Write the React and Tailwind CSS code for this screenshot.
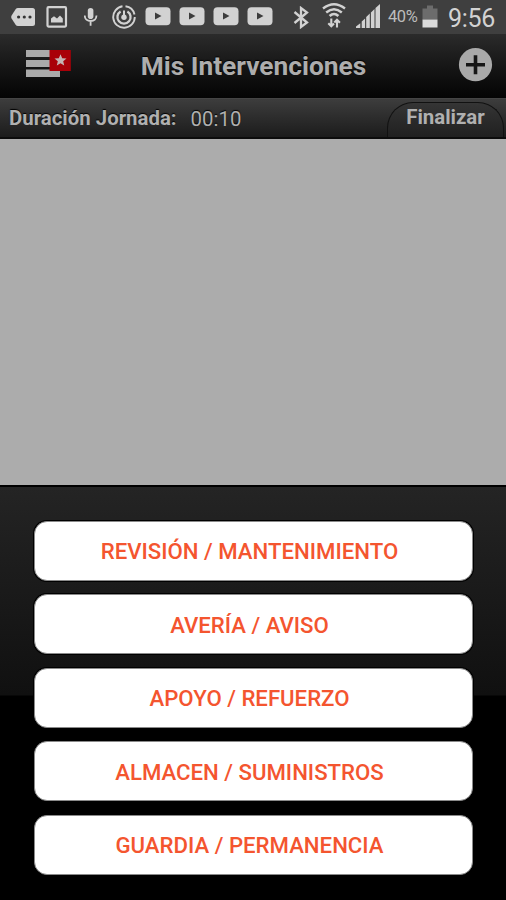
import { useState } from 'react';

const OPTIONS = [
    'REVISIÓN / MANTENIMIENTO',
    'AVERÍA / AVISO',
    'APOYO / REFUERZO',
    'ALMACEN / SUMINISTROS',
    'GUARDIA / PERMANENCIA',
];

const VideoIcon = () => (
    <svg className="w-[26px] h-[19px]" viewBox="0 0 26 19">
        <rect x="0.5" y="0.2" width="25" height="18" rx="4" fill="#d2d2d2" />
        <path d="M10 5.5 L16.5 9 L10 12.5 Z" fill="#3c3c3c" />
    </svg>
);

const StatusBar = () => (
    <div className="h-[34px] bg-[#3f3f3f] flex items-center text-[#d2d2d2]">
        {/* Notifications */}
        <svg className="ml-[11px] -mt-px w-6 h-[18px] shrink-0" viewBox="0 0 24 18">
            <path d="M7 0 H21.5 Q24 0 24 2.5 V15.5 Q24 18 21.5 18 H7 Q5.5 18 4.6 16.7 L0.6 10.5 Q-0.2 9 0.6 7.5 L4.6 1.3 Q5.5 0 7 0 Z" fill="currentColor" />
            <circle cx="7.6" cy="9" r="1.6" fill="#333" />
            <circle cx="13.3" cy="9" r="1.6" fill="#333" />
            <circle cx="19" cy="9" r="1.6" fill="#333" />
        </svg>
        <svg className="ml-[11px] -mt-px w-[22px] h-[22px] shrink-0" viewBox="0 0 22 22">
            <rect x="1.5" y="1.2" width="18.5" height="19.4" rx="1" fill="none" stroke="currentColor" strokeWidth="2.2" />
            <path d="M5 16.5 V12.5 L8 10.3 L11 12.5 L14 9.5 L16.8 12.5 V16.5 Z" fill="currentColor" />
        </svg>
        <svg className="ml-4 -mt-px w-[14px] h-[18px] shrink-0" viewBox="0 0 14 18">
            <rect x="3.8" y="0" width="5.6" height="11" rx="2.8" fill="currentColor" />
            <path d="M0.7 7.5 Q1 13 6.6 13 Q12.2 13 12.5 7.5 M6.6 13 V17.8" fill="none" stroke="currentColor" strokeWidth="1.8" />
        </svg>
        <svg className="ml-[14px] -mt-px w-6 h-6 shrink-0" viewBox="0 0 24 24" fill="none" stroke="currentColor">
            <path d="M10.5 1.3 A10.8 10.8 0 1 0 22.8 12" strokeWidth="1.9" />
            <path d="M13.5 1.3 A10.8 10.8 0 0 1 22.5 9.5" strokeWidth="1.9" />
            <path d="M8.6 6.4 A6.6 6.6 0 1 0 15.4 6.4" strokeWidth="2.3" />
            <path d="M12 5.5 V12" strokeWidth="2" />
            <circle cx="12" cy="12.3" r="2.7" fill="currentColor" stroke="none" />
        </svg>
        <div className="ml-[9px] -mt-px flex gap-[8px] shrink-0">
            <VideoIcon />
            <VideoIcon />
            <VideoIcon />
            <VideoIcon />
        </div>
        {/* Connectivity */}
        <svg className="ml-5 w-4 h-[23px] shrink-0" viewBox="0 0 16 23" fill="none" stroke="currentColor" strokeWidth="2.3">
            <path d="M1.5 6 L14 16.5 L8 21 V2 L14 6.5 L1.5 17" />
        </svg>
        <svg className="ml-[13px] -mt-[3px] w-6 h-[25px] shrink-0" viewBox="0 0 24 25" fill="none" stroke="currentColor">
            <path d="M1 5.5 Q12 -3 23 5.5" strokeWidth="2.4" />
            <path d="M4.2 9.5 Q12 2.8 19.8 9.5" strokeWidth="2.4" />
            <path d="M7.6 13 Q12 9 16.4 13" strokeWidth="2.6" />
            <path d="M9.3 15.5 V23 M6.3 20.2 L9.3 23.3 L12 20.5" strokeWidth="2.1" />
            <path d="M15 24.5 V17.5 M12.3 19.5 L15 16.7 L17.9 19.7" strokeWidth="2.1" />
        </svg>
        <svg className="ml-[10px] -mt-[2px] w-6 h-[24px] shrink-0" viewBox="0 0 24 24" fill="currentColor">
            <path d="M0 24 V22.5 L4.3 19.2 V24 Z M5.7 24 V17.5 L9.1 14.6 V24 Z M10.2 24 V13 L13.8 9.6 V24 Z M14.9 24 V8.5 L18.5 5 V24 Z M19.5 24 V4 L24 0 V24 Z" />
        </svg>
        <span className="ml-[8px] mt-px w-[31px] shrink-0 text-[16.5px] tracking-[-0.4px] whitespace-nowrap text-[#bcbcbc]">40%</span>
        <svg className="ml-[3px] -mt-[2px] w-4 h-[23px] shrink-0" viewBox="0 0 16 23">
            <path d="M0.5 3.5 H5 V0.5 H11 V3.5 H15.5 V14.5 H0.5 Z" fill="#6c6c6c" />
            <rect x="0.5" y="14.5" width="15" height="8" fill="#dadada" />
        </svg>
        <span className="ml-[10px] text-[25px] leading-none tracking-[-0.3px] whitespace-nowrap mt-[2px]">9:56</span>
    </div>
);

const Header = () => (
    <header className="h-16 bg-linear-to-b from-[#2b2b2b] to-[#050505] flex items-center pl-[26px] pr-[13px]">
        <button className="w-[46px] h-7 -mt-1 shrink-0">
            <svg className="w-[46px] h-7" viewBox="0 0 46 28">
                <path d="M0 0 H34 V7 H0 Z M0 10 H34 V17 H0 Z M0 19.5 H34 V27 H0 Z" fill="#aaa" />
                <rect x="23.5" y="-1" width="21.3" height="22" fill="#a90008" />
                <path d="M34.5 4.2 L36.2 8.2 L40.5 8.5 L37.2 11.3 L38.2 15.5 L34.5 13.2 L30.8 15.5 L31.8 11.3 L28.5 8.5 L32.8 8.2 Z" fill="#c4b4b4" />
            </svg>
        </button>
        <h1 className="flex-1 text-center pr-[23px] pt-[2px] text-[26.3px] font-bold text-[#adadad] whitespace-nowrap [text-shadow:0_-1px_1px_#000]">Mis Intervenciones</h1>
        <button className="w-[35px] h-[35px] -mt-1 shrink-0">
            <svg className="w-[35px] h-[35px]" viewBox="0 0 35 35">
                <circle cx="17.5" cy="17.7" r="16.6" fill="#a9a9a9" />
                <path d="M17.5 8.2 V27.2 M8 17.7 H27" stroke="#161616" strokeWidth="3.6" />
            </svg>
        </button>
    </header>
);

const App = () => {
    const [selected, setSelected] = useState(null);

    return (
        <div className="w-full h-[900px] flex flex-col overflow-hidden bg-black font-['Roboto',sans-serif]">
            <StatusBar />
            <Header />

            {/* Working day bar */}
            <div className="h-[41px] bg-linear-to-b from-[#3d3d3d] to-[#1c1c1c] border-b-2 border-[#0c0c0c] border-t border-t-[#454545] flex items-stretch text-[20.4px] text-[#b0b0b0] [text-shadow:0_-1px_1px_#000]">
                <span className="pl-[9px] leading-[39px] font-bold whitespace-nowrap">Duración Jornada:</span>
                <span className="ml-[14px] leading-[40px] whitespace-nowrap">00:10</span>
                <button className="ml-auto mr-[2px] mt-[3px] w-[117px] rounded-t-[26px] border border-b-0 border-[#111] bg-linear-to-b from-[#353535] to-[#202020] font-bold leading-[27px] pb-[6px]">
                    Finalizar
                </button>
            </div>

            <main className="h-[346px] bg-[#acacac]"></main>

            {/* Intervention type sheet */}
            <div className="flex-1 border-t-2 border-black bg-[linear-gradient(to_bottom,#242424_0px,#101010_208px,#000_209px)] pt-[34px] pl-[34px] pr-[33px] flex flex-col gap-[13.4px]">
                {OPTIONS.map((option) => (
                    <button
                        key={option}
                        onClick={() => setSelected(option)}
                        aria-pressed={selected === option}
                        className="h-[60px] shrink-0 rounded-[13px] bg-white border border-[#8a8a8a] shadow-[0_0_0_1px_#000] text-[#f4552f] text-[22.2px] font-medium whitespace-nowrap pr-[8px] pt-[2px]"
                    >
                        {option}
                    </button>
                ))}
            </div>
        </div>
    );
};

export default App;
